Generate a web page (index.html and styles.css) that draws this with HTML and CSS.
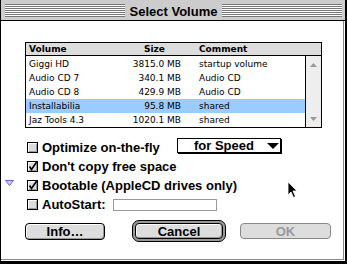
FILE: index.html
```html
<!DOCTYPE html>
<html>
<head>
<meta charset="utf-8">
<title>Select Volume</title>
<link rel="stylesheet" href="styles.css">
</head>
<body>
<div class="window">
  <div class="titlebar">
    <div class="stripes"></div>
    <div class="title">Select Volume</div>
    <div class="stripes"></div>
  </div>
  <div class="content">
    <div class="listbox">
      <div class="list-header">
        <span class="c-vol">Volume</span><span class="c-size">Size</span><span class="c-com">Comment</span>
      </div>
      <div class="list-body">
        <div class="rows">
          <div class="row"><span class="c-vol">Giggi HD</span><span class="c-size">3815.0 MB</span><span class="c-com">startup volume</span></div>
          <div class="row"><span class="c-vol">Audio CD 7</span><span class="c-size">340.1 MB</span><span class="c-com">Audio CD</span></div>
          <div class="row"><span class="c-vol">Audio CD 8</span><span class="c-size">429.9 MB</span><span class="c-com">Audio CD</span></div>
          <div class="row sel"><span class="c-vol">Installabilia</span><span class="c-size">95.8 MB</span><span class="c-com">shared</span></div>
          <div class="row"><span class="c-vol">Jaz Tools 4.3</span><span class="c-size">1020.1 MB</span><span class="c-com">shared</span></div>
        </div>
        <div class="scrollbar">
          <svg class="sarrow" width="9" height="5" viewBox="0 0 9 5"><polygon points="1,5 8,5 4.5,1" fill="#999"/></svg>
          <svg class="sarrow" width="9" height="5" viewBox="0 0 9 5"><polygon points="1,0 8,0 4.5,4" fill="#999"/></svg>
        </div>
      </div>
    </div>

    <div class="options">
      <div class="opt">
        <div class="gutter"></div>
        <svg class="cb" width="11" height="11" viewBox="0 0 11 11"><rect x="0.5" y="0.5" width="10" height="10" fill="#ddd" stroke="#000"/><path d="M1.5 9V1.5H9" stroke="#fff" fill="none"/><path d="M2 9.5H9.5V2" stroke="#999" fill="none"/></svg>
        <span class="lbl lbl-opt">Optimize on-the-fly</span>
        <div class="popup">
          <span>for Speed</span>
          <svg class="parrow" width="12" height="6" viewBox="0 0 12 6"><polygon points="0,0 12,0 6,6" fill="#000"/></svg>
        </div>
      </div>
      <div class="opt">
        <div class="gutter"></div>
        <svg class="cb" width="11" height="11" viewBox="0 0 11 11"><rect x="0.5" y="0.5" width="10" height="10" fill="#ddd" stroke="#000"/><path d="M1.5 9V1.5H9" stroke="#fff" fill="none"/><path d="M2 9.5H9.5V2" stroke="#999" fill="none"/><path d="M2.5 5.5L4.5 8.5L9.8 0.8" stroke="#000" stroke-width="1.6" fill="none"/></svg>
        <span class="lbl">Don't copy free space</span>
      </div>
      <div class="opt">
        <div class="gutter">
          <svg class="disclose" width="9" height="7" viewBox="0 0 9 7"><polygon points="0.5,0.5 8.5,0.5 4.5,5.5" fill="#ccccff" stroke="#6666cc"/></svg>
        </div>
        <svg class="cb" width="11" height="11" viewBox="0 0 11 11"><rect x="0.5" y="0.5" width="10" height="10" fill="#ddd" stroke="#000"/><path d="M1.5 9V1.5H9" stroke="#fff" fill="none"/><path d="M2 9.5H9.5V2" stroke="#999" fill="none"/><path d="M2.5 5.5L4.5 8.5L9.8 0.8" stroke="#000" stroke-width="1.6" fill="none"/></svg>
        <span class="lbl">Bootable (AppleCD drives only)</span>
      </div>
      <div class="opt">
        <div class="gutter"></div>
        <svg class="cb" width="11" height="11" viewBox="0 0 11 11"><rect x="0.5" y="0.5" width="10" height="10" fill="#ddd" stroke="#000"/><path d="M1.5 9V1.5H9" stroke="#fff" fill="none"/><path d="M2 9.5H9.5V2" stroke="#999" fill="none"/></svg>
        <span class="lbl lbl-auto">AutoStart:</span>
        <div class="field"></div>
      </div>
    </div>

    <div class="buttons">
      <div class="btn btn-info">Info…</div>
      <div class="ring"><div class="btn btn-cancel">Cancel</div></div>
      <div class="btn btn-ok">OK</div>
    </div>
  </div>
  <svg class="cursor" width="11" height="18" viewBox="0 0 11 18"><path d="M1 1V14L4 11L6.5 16.5L8.5 15.5L6 10H10Z" fill="#000" stroke="#fff" stroke-width="0.8" stroke-linejoin="round"/></svg>
</div>
</body>
</html>
```

FILE: styles.css
```css
* { box-sizing: border-box; }
html, body { margin: 0; padding: 0; background: #fff; }
body {
  width: 347px;
  height: 264px;
  overflow: hidden;
  font-family: "Liberation Sans", Arial, sans-serif;
  color: #000;
}
.window {
  position: relative;
  width: 347px;
  height: 264px;
  border-left: 1px solid #000;
  border-right: 2px solid #000;
  border-bottom: 3px solid #000;
  background: #fff;
  display: flex;
  flex-direction: column;
}
.titlebar {
  flex: none;
  height: 21px;
  background: #cccccc;
  border-bottom: 1px solid #000;
  display: flex;
  align-items: flex-start;
  padding: 4px 3px 0 4px;
}
.stripes {
  flex: 1;
  height: 13px;
  background: repeating-linear-gradient(to bottom, #777 0 1px, #fff 1px 2px);
}
.title {
  flex: none;
  padding: 0 5px;
  font-weight: bold;
  font-size: 13px;
  line-height: 13px;
  margin-top: 1px;
}
.content {
  flex: 1;
  margin: 0 1px 1px 0;
  border-right: 1px solid #888;
  border-bottom: 1px solid #888;
  display: flex;
  flex-direction: column;
}
.listbox {
  margin: 21px 0 0 24px;
  width: 297px;
  border: 1px solid #000;
  font-family: "DejaVu Sans", Verdana, sans-serif;
  font-size: 9px;
}
.list-header {
  height: 13px;
  background: #dddddd;
  border-bottom: 1px solid #000;
  display: grid;
  grid-template-columns: 100px 52px 1fr;
  padding-left: 3px;
  font-weight: bold;
  line-height: 12px;
}
.list-header .c-size { padding-left: 15px; }
.c-com { padding-left: 18px; white-space: nowrap; }
.list-body {
  display: flex;
  height: 71px;
}
.rows {
  width: 279px;
  padding-top: 1px;
}
.row {
  height: 14px;
  line-height: 14px;
  display: grid;
  grid-template-columns: 100px 52px 1fr;
  padding-left: 3px;
  white-space: nowrap;
}
.row .c-size { text-align: right; }
.row.sel { background: #99ccff; }
.scrollbar {
  width: 16px;
  border-left: 1px solid #000;
  background: #eeeeee;
  display: flex;
  flex-direction: column;
  justify-content: space-between;
  align-items: center;
  padding: 6px 0 5px;
}
.sarrow { display: block; }

.options {
  margin-top: 10px;
  font-weight: bold;
  font-size: 13px;
}
.opt {
  height: 19px;
  display: flex;
  align-items: center;
  white-space: nowrap;
}
.gutter {
  flex: none;
  width: 26px;
  align-self: stretch;
  padding: 4px 0 0 4px;
}
.disclose { display: block; }
.cb { flex: none; display: block; margin-right: 4px; overflow: visible; }
.lbl-opt { width: 135px; flex: none; }
.lbl-auto { width: 71px; flex: none; }
.popup {
  flex: none;
  width: 104px;
  height: 15px;
  margin-bottom: 4px;
  border: 1px solid #000;
  box-shadow: 1px 1px 0 #000;
  background: #fff;
  display: flex;
  align-items: center;
  padding-left: 16px;
  line-height: 13px;
}
.parrow { margin-left: auto; margin-right: 1px; display: block; }
.field {
  flex: none;
  width: 104px;
  height: 12px;
  border: 1px solid #999;
  background: #fff;
}

.buttons {
  margin-top: 6px;
  height: 22px;
  padding-left: 24px;
  display: flex;
  align-items: center;
}
.btn {
  height: 17px;
  border: 1px solid #000;
  border-radius: 4px;
  background: #dddddd;
  box-shadow: inset 1px 1px 0 #fff, inset -1px -1px 0 #999;
  display: flex;
  align-items: center;
  justify-content: center;
  font-weight: bold;
  font-size: 13px;
  line-height: 13px;
}
.btn-info { width: 80px; }
.ring {
  margin-left: 27px;
  width: 94px;
  height: 22px;
  border: 1px solid #000;
  border-radius: 7px;
  background: #999;
  padding: 2px;
}
.btn-cancel { width: 100%; height: 100%; }
.btn-ok {
  margin-left: 14px;
  width: 91px;
  height: 16px;
  border-color: #888;
  color: #999;
  box-shadow: none;
}
.cursor {
  position: absolute;
  left: 286px;
  top: 181px;
}
```
